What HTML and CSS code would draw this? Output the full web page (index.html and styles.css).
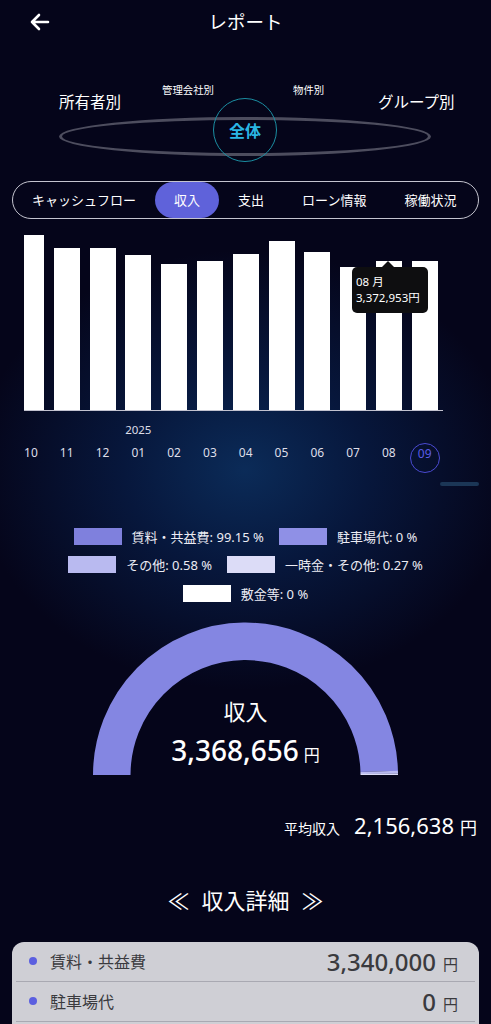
FILE: index.html
```html
<!DOCTYPE html>
<html lang="ja">
<head>
<meta charset="utf-8">
<title>レポート</title>
<link rel="stylesheet" href="styles.css">
</head>
<body>
<div class="page">
  <header class="header">
    <svg class="back" width="24" height="24" viewBox="0 0 24 24"><path d="M21 12H5M12 5l-7 7 7 7" fill="none" stroke="#fff" stroke-width="2.6" stroke-linecap="round" stroke-linejoin="round"/></svg>
    <h1 class="title">レポート</h1>
  </header>

  <div class="orbit">
    <div class="ring"></div>
    <div class="orbit-item owner">所有者別</div>
    <div class="orbit-item company">管理会社別</div>
    <div class="orbit-item property">物件別</div>
    <div class="orbit-item group">グループ別</div>
    <div class="center-circle">全体</div>
  </div>

  <nav class="tabs">
    <span class="tab">キャッシュフロー</span>
    <span class="tab active">収入</span>
    <span class="tab">支出</span>
    <span class="tab">ローン情報</span>
    <span class="tab">稼働状況</span>
  </nav>

  <section class="chart">
    <div class="plot">
      <div class="bar first" style="height:175px"></div>
      <div class="bar" style="height:162px"></div>
      <div class="bar" style="height:162px"></div>
      <div class="bar" style="height:155px"></div>
      <div class="bar" style="height:146px"></div>
      <div class="bar" style="height:149px"></div>
      <div class="bar" style="height:156px"></div>
      <div class="bar" style="height:169px"></div>
      <div class="bar" style="height:158px"></div>
      <div class="bar" style="height:143px"></div>
      <div class="bar" style="height:149px"></div>
      <div class="bar" style="height:149px"></div>
      <div class="tooltip">
        <div>08 月</div>
        <div>3,372,953円</div>
      </div>
    </div>
    <div class="years">
      <span></span><span></span><span></span><span>2025</span>
    </div>
    <div class="months">
      <span>10</span><span>11</span><span>12</span><span>01</span><span>02</span><span>03</span>
      <span>04</span><span>05</span><span>06</span><span>07</span><span>08</span><span class="current">09</span>
    </div>
    <div class="scroll-row"><div class="scroll-thumb"></div></div>
  </section>

  <section class="legend">
    <div class="legend-row">
      <span class="item"><i class="sw c1"></i>賃料・共益費: 99.15 %</span>
      <span class="item"><i class="sw c2"></i>駐車場代: 0 %</span>
    </div>
    <div class="legend-row">
      <span class="item"><i class="sw c3"></i>その他: 0.58 %</span>
      <span class="item"><i class="sw c4"></i>一時金・その他: 0.27 %</span>
    </div>
    <div class="legend-row">
      <span class="item"><i class="sw c5"></i>敷金等: 0 %</span>
    </div>
  </section>

  <section class="gauge">
    <svg width="491" height="174" viewBox="0 0 491 174">
      <path d="M111.75 167 A133.75 133.75 0 0 1 379.2 163.43" fill="none" stroke="#8486e2" stroke-width="37.5"/>
      <path d="M379.2 163.43 A133.75 133.75 0 0 1 379.25 165.86" fill="none" stroke="#b9baf0" stroke-width="37.5"/>
      <path d="M379.25 165.86 A133.75 133.75 0 0 1 379.25 167" fill="none" stroke="#dcdcf7" stroke-width="37.5"/>
      <text class="g-label" x="245.5" y="112" text-anchor="middle">収入</text>
      <text class="g-value" x="245.5" y="153" text-anchor="middle">3,368,656<tspan class="g-yen" dx="5">円</tspan></text>
    </svg>
  </section>

  <div class="average">
    <span class="avg-label">平均収入</span>
    <span class="avg-value">2,156,638</span>
    <span class="avg-yen">円</span>
  </div>

  <h2 class="detail-title"><span>≪</span>収入詳細<span>≫</span></h2>

  <div class="card">
    <div class="row">
      <span class="dot"></span>
      <span class="row-label">賃料・共益費</span>
      <span class="row-value">3,340,000</span>
      <span class="row-yen">円</span>
    </div>
    <div class="row">
      <span class="dot"></span>
      <span class="row-label">駐車場代</span>
      <span class="row-value">0</span>
      <span class="row-yen">円</span>
    </div>
    <div class="row empty"></div>
  </div>
</div>
</body>
</html>
```

FILE: styles.css
```css
* { box-sizing: border-box; }
html, body {
  margin: 0;
  padding: 0;
}
body {
  background:
    radial-gradient(ellipse 270px 220px at 245px 470px, #0b2b58 0%, #07173c 45%, rgba(5,5,26,0) 100%),
    #05051a;
  color: #fff;
  font-family: "Noto Sans", "Noto Sans CJK JP", sans-serif;
  width: 491px;
  height: 1024px;
  overflow: hidden;
}
.page { width: 491px; }

.header {
  height: 44px;
  display: flex;
  align-items: center;
  justify-content: center;
  position: relative;
}
.back {
  position: absolute;
  left: 27px;
  top: 10px;
}
.title {
  margin: 0;
  font-size: 18.5px;
  font-weight: 400;
  line-height: 24px;
  margin-top: -2px;
  font-family: "Noto Sans CJK JP", sans-serif;
}

/* carousel */
.orbit {
  position: relative;
  height: 130px;
  font-family: "Noto Sans CJK JP", sans-serif;
}
.ring {
  position: absolute;
  left: 59px;
  top: 73px;
  width: 372px;
  height: 39px;
  border: 3.5px solid #4d4d5e;
  border-radius: 50%;
}
.orbit-item {
  position: absolute;
  white-space: nowrap;
  color: #fff;
}
.owner { left: 59px; top: 46px; font-size: 15.5px; line-height: 22px; }
.group { left: 378px; top: 46px; font-size: 15.5px; line-height: 22px; }
.company { left: 162px; top: 39px; font-size: 10.4px; line-height: 14px; }
.property { left: 293px; top: 39px; font-size: 10.4px; line-height: 14px; }
.center-circle {
  position: absolute;
  left: 213px;
  top: 54px;
  width: 64px;
  height: 64px;
  border: 1.5px solid #1b8ea2;
  border-radius: 50%;
  display: flex;
  align-items: center;
  justify-content: center;
  color: #2ab6e4;
  font-size: 16px;
  font-weight: 700;
}

/* tabs */
.tabs {
  margin: 7px 12px 0;
  height: 38px;
  border: 1px solid #c4c4cf;
  border-radius: 19px;
  display: flex;
  align-items: center;
  font-family: "Noto Sans CJK JP", sans-serif;
}
.tab {
  padding: 0 19px;
  height: 36px;
  line-height: 36px;
  font-size: 13px;
  white-space: nowrap;
  border-radius: 18px;
}
.tab.active {
  background: #5f62da;
}

/* chart */
.plot {
  position: relative;
  margin: 6px 0 0 24px;
  width: 419px;
  height: 186px;
  border-bottom: 1px solid #c2c2cf;
  display: flex;
  align-items: flex-end;
  gap: 9.8px;
}
.bar {
  width: 26px;
  background: #ffffff;
  flex: none;
}
.bar.first { width: 20px; }
.tooltip {
  position: absolute;
  left: 328px;
  top: 42px;
  width: 76px;
  padding: 7px 4px;
  background: #0e0e10;
  border-radius: 5px;
  font-size: 11.5px;
  line-height: 16px;
  color: #fff;
  white-space: nowrap;
}
.tooltip::before {
  content: "";
  position: absolute;
  left: 30px;
  top: -6px;
  border-left: 6px solid transparent;
  border-right: 6px solid transparent;
  border-bottom: 6px solid #0e0e10;
}
.years, .months {
  display: grid;
  grid-template-columns: repeat(12, 35.8px);
  margin-left: 13px;
  color: #dedee8;
  text-align: center;
}
.years {
  margin-top: 11px;
  height: 16px;
  font-size: 11.5px;
  line-height: 16px;
}
.months {
  margin-top: 5px;
  height: 30px;
  font-size: 12px;
  line-height: 20px;
}
.months .current {
  justify-self: center;
  width: 30px;
  height: 30px;
  border: 1px solid #4a4ad2;
  border-radius: 50%;
  color: #5a5ce6;
}
.scroll-row {
  margin-top: 9px;
  display: flex;
  justify-content: flex-end;
  padding-right: 12px;
}
.scroll-thumb {
  width: 39px;
  height: 4px;
  background: #1b3656;
  border-radius: 2px;
}

/* legend */
.legend {
  margin-top: 36px;
}
.legend-row {
  height: 28.5px;
  display: flex;
  justify-content: center;
  align-items: center;
  gap: 15px;
}
.item {
  display: flex;
  align-items: center;
  gap: 10px;
  font-size: 13px;
  color: #ececf4;
  white-space: nowrap;
}
.sw {
  display: block;
  width: 48px;
  height: 17px;
}
.c1 { background: #7f80dd; }
.c2 { background: #8f90e6; }
.c3 { background: #b9baf0; }
.c4 { background: #dcdcf7; }
.c5 { background: #ffffff; }

/* gauge */
.gauge {
  height: 174px;
}
.gauge svg { display: block; }
.g-label {
  font-family: "Noto Sans CJK JP", sans-serif;
  font-size: 22px;
  fill: #fff;
}
.g-value {
  font-family: "Noto Sans", sans-serif;
  font-size: 28px;
  font-weight: 500;
  fill: #fff;
}
.g-yen {
  font-family: "Noto Sans CJK JP", sans-serif;
  font-size: 16px;
  font-weight: 400;
}

/* average */
.average {
  margin-top: 28px;
  height: 30px;
  display: flex;
  justify-content: flex-end;
  align-items: baseline;
  padding-right: 14px;
}
.avg-label {
  font-family: "Noto Sans CJK JP", sans-serif;
  font-size: 14px;
  margin-right: 14px;
}
.avg-value {
  font-size: 22px;
  line-height: 30px;
}
.avg-yen {
  font-family: "Noto Sans CJK JP", sans-serif;
  font-size: 17px;
  margin-left: 6px;
}

/* detail */
.detail-title {
  margin: 44px 0 0;
  height: 30px;
  line-height: 30px;
  text-align: center;
  font-size: 22px;
  font-weight: 400;
  font-family: "Noto Sans CJK JP", sans-serif;
}
.detail-title span {
  margin: 0 12px;
}

.card {
  margin: 28px 12px 0;
  background: #cfcfd5;
  border-radius: 12px;
  padding: 0 4px;
}
.row {
  display: flex;
  align-items: center;
  height: 40px;
  border-bottom: 1px solid #a9a9b2;
  padding: 0 17px 0 13px;
  color: #3a3a3e;
}
.row.empty { border-bottom: 0; }
.dot {
  width: 8px;
  height: 8px;
  border-radius: 50%;
  background: #5b5fe0;
  margin-right: 13px;
}
.row-label {
  font-family: "Noto Sans CJK JP", sans-serif;
  font-size: 16px;
  flex: 1;
}
.row-value {
  font-size: 24px;
  font-weight: 500;
}
.row-yen {
  font-family: "Noto Sans CJK JP", sans-serif;
  font-size: 15px;
  margin-left: 7px;
  margin-top: 5px;
}
```
